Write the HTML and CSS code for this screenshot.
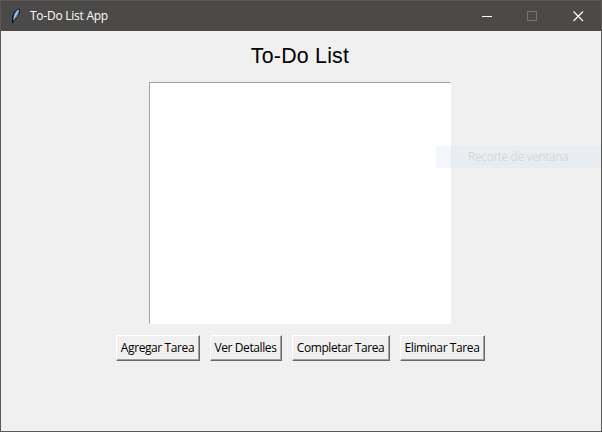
FILE: index.html
```html
<!DOCTYPE html>
<html lang="es">
<head>
<meta charset="utf-8">
<title>To-Do List App</title>
<link rel="stylesheet" href="styles.css">
</head>
<body>
<div class="window">
  <header class="titlebar">
    <svg class="feather" width="16" height="18" viewBox="0 0 16 18">
      <path d="M4 15V10L6 5L10 1.500L12 2L11.500 7L8 12L5.500 13.500V16Z" fill="#111820"/>
      <path d="M5.500 11.500L6.500 6L10 2.500L11 3L10.500 7L8 11Z" fill="#6794cf"/>
      <path d="M5.500 13L7.500 8L10.500 3" fill="none" stroke="#d3e5f4" stroke-width=".9"/>
      <path d="M4.500 12V16" stroke="#050505"/>
    </svg>
    <span class="caption">To-Do List App</span>
    <div class="controls">
      <svg width="46" height="29" viewBox="0 0 46 29"><path d="M19 14.500H29" stroke="#fff"/></svg>
      <svg width="46" height="29" viewBox="0 0 46 29"><path d="M18.500 9.500H27.500V18.500H18.500Z" fill="none" stroke="#777573"/></svg>
      <svg width="46" height="29" viewBox="0 0 46 29"><path d="M18.500 9.500L28 19M28 9.500L18.500 19" stroke="#fff" stroke-width="1.200"/></svg>
    </div>
  </header>
  <main class="content">
    <h1 class="heading">To-Do List</h1>
    <div class="listbox"></div>
    <div class="actions">
      <button class="btn add"><span>Agregar Tarea</span></button>
      <button class="btn details"><span>Ver Detalles</span></button>
      <button class="btn complete"><span>Completar Tarea</span></button>
      <button class="btn remove"><span>Eliminar Tarea</span></button>
    </div>
  </main>
  <div class="ghost">Recorte de ventana</div>
</div>
</body>
</html>
```
FILE: styles.css
```css
* { box-sizing: border-box; }
body { margin: 0; font: 12px/16px "Open Sans", "Noto Sans", sans-serif; }
.window {
  position: relative;
  width: 602px;
  height: 432px;
  border: 1px solid #5b5958;
  background: #f0f0f0;
  overflow: hidden;
}
.titlebar {
  display: flex;
  align-items: center;
  height: 30px;
  padding-left: 7px;
  background: #4b4a48;
  color: #fff;
}
.feather { margin-right: 6px; }
.caption { letter-spacing: -0.25px; white-space: nowrap; }
.controls { display: flex; margin-left: auto; }
.controls svg { display: block; }
.content {
  display: flex;
  flex-direction: column;
  align-items: center;
  padding-right: 2px;
}
.heading {
  margin: 12px 0 0;
  font: 400 21.3px/26px "Liberation Sans", Arial, sans-serif;
  letter-spacing: 0.25px;
  color: #000;
}
.listbox {
  width: 302px;
  height: 242px;
  margin-top: 13px;
  border: 1px solid;
  border-color: #a0a0a0 #fff #fff #a0a0a0;
  background: #fff;
}
.actions { display: flex; gap: 10px; margin-top: 11px; }
.btn {
  display: flex;
  align-items: center;
  justify-content: center;
  height: 26px;
  padding: 0;
  border: 1px solid;
  border-color: #fff #696969 #696969 #fff;
  box-shadow: inset -1px -1px #a0a0a0;
  background: #f0f0f0;
  color: #000;
  font: inherit;
  letter-spacing: -0.4px;
  white-space: nowrap;
}
.add { width: 84px; }
.details { width: 72px; }
.complete { width: 98px; }
.remove { width: 85px; }
.ghost {
  position: absolute;
  top: 145px;
  right: 0;
  width: 165px;
  height: 22px;
  padding-left: 32px;
  line-height: 22px;
  letter-spacing: -0.45px;
  background: rgba(222, 234, 243, 0.36);
  color: #d8d8da;
}
```
